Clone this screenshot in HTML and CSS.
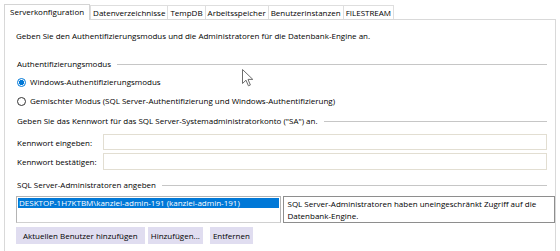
FILE: index.html
```html
<!DOCTYPE html>
<html lang="de">
<head>
<meta charset="utf-8">
<title>Serverkonfiguration</title>
<link rel="stylesheet" href="styles.css">
</head>
<body>
<div class="dialog">
  <div class="tabs">
    <div class="tab active">Serverkonfiguration</div>
    <div class="tab">Datenverzeichnisse</div>
    <div class="tab">TempDB</div>
    <div class="tab">Arbeitsspeicher</div>
    <div class="tab">Benutzerinstanzen</div>
    <div class="tab">FILESTREAM</div>
  </div>
  <div class="panel">
    <div class="row desc">Geben Sie den Authentifizierungsmodus und die Administratoren für die Datenbank-Engine an.</div>
    <div class="row group g1"><span>Authentifizierungsmodus</span><span class="rule"></span></div>
    <label class="row radio r1"><span class="dot checked"></span>Windows-Authentifizierungsmodus</label>
    <label class="row radio r2"><span class="dot"></span>Gemischter Modus (SQL Server-Authentifizierung und Windows-Authentifizierung)</label>
    <div class="row group g2"><span>Geben Sie das Kennwort für das SQL Server-Systemadministratorkonto ("SA") an.</span><span class="rule"></span></div>
    <div class="field f1"><span class="lbl">Kennwort eingeben:</span><span class="input"></span></div>
    <div class="field f2"><span class="lbl">Kennwort bestätigen:</span><span class="input"></span></div>
    <div class="row group g3"><span>SQL Server-Administratoren angeben</span><span class="rule"></span></div>
    <div class="admins">
      <div class="list"><div class="item">DESKTOP-1H7KTBM\kanzlei-admin-191 (kanzlei-admin-191)</div></div>
      <div class="info">SQL Server-Administratoren haben uneingeschränkt Zugriff auf die Datenbank-Engine.</div>
    </div>
    <div class="buttons">
      <button class="btn first">Aktuellen Benutzer hinzufügen</button>
      <button class="btn">Hinzufügen...</button>
      <button class="btn last">Entfernen</button>
    </div>
  </div>
  <svg class="cursor" width="12" height="18" viewBox="0 0 12 18"><path d="M0.5 0.5 L0.5 14.5 L4 11.2 L6.4 16.8 L8.4 16 L6 10.4 L10.8 10.4 Z" fill="#fff" stroke="#6d6d6d" stroke-width="1" stroke-linejoin="round"/></svg>
</div>
</body>
</html>
```
FILE: styles.css
```css
html, body {
  margin: 0;
  padding: 0;
  background: #ffffff;
}
body {
  font-family: "Open Sans", "Noto Sans", sans-serif;
  font-size: 8px;
  color: #000000;
  width: 560px;
  height: 251px;
  overflow: hidden;
}
.dialog {
  position: relative;
  padding: 3px 4px 0 4px;
}
.tabs {
  display: flex;
  align-items: flex-end;
  height: 16px;
  padding-left: 1px;
}
.tab {
  height: 13px;
  line-height: 13px;
  padding: 0 2px;
  border: 1px solid #dedede;
  border-bottom: none;
  margin-left: -1px;
  background: #ffffff;
  white-space: nowrap;
}
.tab.active {
  height: 15px;
  line-height: 14px;
  padding: 0 5px;
  margin-left: -1px;
  margin-right: 1px;
  position: relative;
  z-index: 1;
  margin-bottom: -1px;
  border-color: #d4d4d4;
}
.panel {
  border: 1px solid #d9d9d9;
  height: 231px;
  padding: 0 0 0 11px;
  display: flex;
  flex-direction: column;
}
.row {
  height: 14px;
  line-height: 14px;
  white-space: nowrap;
}
.desc { margin-top: 9px; }
.group {
  display: flex;
  align-items: center;
  padding-right: 8px;
}
.group .rule {
  flex: 1;
  height: 0;
  border-top: 1px solid #c6c6c6;
  margin-left: 6px;
  margin-top: 1px;
}
.g1 { margin-top: 14px; margin-left: 1px; }
.radio {
  display: flex;
  align-items: center;
}
.r1 { margin-top: 3px; height: 16px; }
.r2 { margin-top: 3px; height: 16px; }
.dot {
  width: 9px;
  height: 9px;
  border-radius: 50%;
  border: 1px solid #333333;
  margin: 0 4px 0 1px;
  box-sizing: border-box;
  flex: none;
}
.dot.checked {
  border-color: #0078d7;
  background: radial-gradient(circle, #0078d7 0 2.3px, #ffffff 2.9px);
}
.g2 { margin-top: 5px; margin-left: 1px; }
.field {
  display: flex;
  align-items: center;
  padding-right: 8px;
  white-space: nowrap;
}
.f1 { margin-top: 6px; height: 16px; }
.f2 { margin-top: 3px; height: 17px; }
.lbl {
  width: 86px;
  flex: none;
  padding-left: 1px;
}
.input {
  flex: 1;
  align-self: stretch;
  border: 1px solid #e2ded2;
  background: #ffffff;
}
.g3 { margin-top: 8px; margin-left: 1px; }
.admins {
  display: flex;
  margin-top: 4px;
  height: 27px;
  gap: 2px;
}
.list {
  width: 265px;
  border: 1px solid #b4b4b4;
  border-bottom-color: #d0d0d0;
  box-sizing: border-box;
  padding: 1px;
}
.item {
  background: #0078d7;
  color: #ffffff;
  height: 10px;
  line-height: 10px;
  padding-left: 1px;
  white-space: nowrap;
}
.info {
  width: 273px;
  box-sizing: border-box;
  border: 1px solid #8e8e8e;
  padding: 1px 4px;
  line-height: 11.5px;
}
.buttons {
  display: flex;
  margin-top: 4px;
  gap: 3px;
}
.btn {
  font: inherit;
  color: #000000;
  height: 17px;
  border: none;
  background: #e0ddf0;
  padding: 0 3px;
  margin: 0;
  white-space: nowrap;
}
.btn.first { padding: 0 7px; }
.btn.last { margin-left: 4px; }
.cursor {
  position: absolute;
  left: 242px;
  top: 69px;
}
```
